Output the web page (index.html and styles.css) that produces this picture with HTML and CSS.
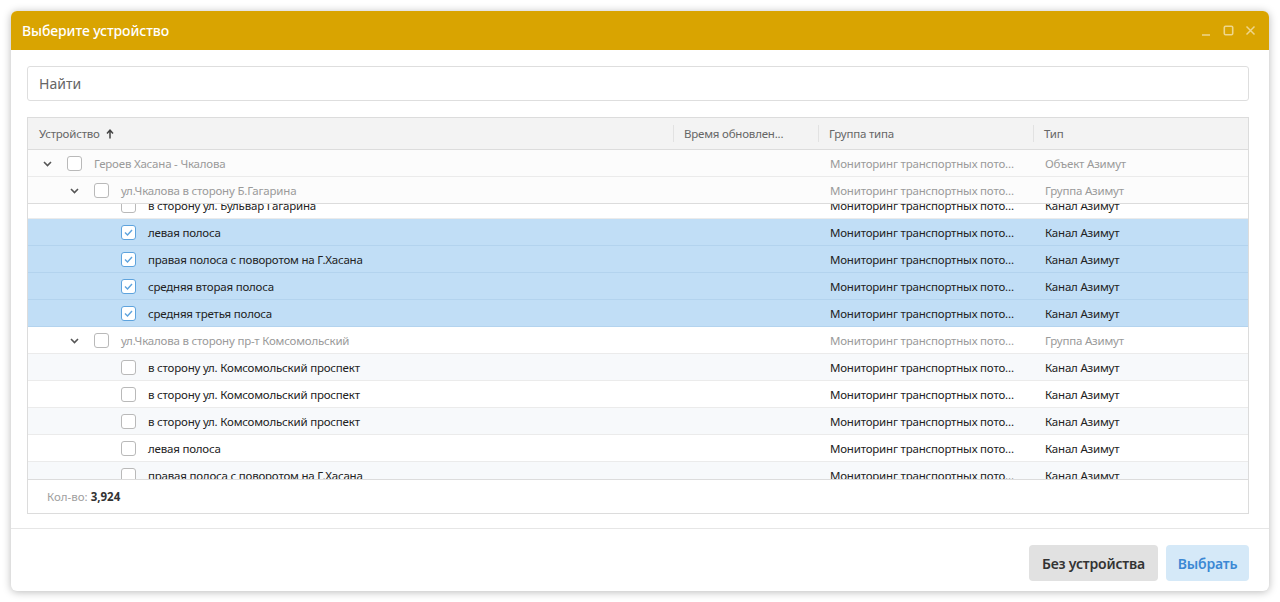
FILE: index.html
```html
<!DOCTYPE html>
<html lang="ru">
<head>
<meta charset="utf-8">
<title>Выберите устройство</title>
<link rel="stylesheet" href="styles.css">
</head>
<body>
<div class="dialog">
  <div class="titlebar">
    <div class="title">Выберите устройство</div>
    <div class="controls">
      <svg width="11" height="11" viewBox="0 0 11 11"><path d="M1 10h8" stroke="currentColor" stroke-width="1.6"/></svg>
      <svg width="11" height="11" viewBox="0 0 11 11"><rect x="1.3" y="1.3" width="8.4" height="8.4" rx="1.2" fill="none" stroke="currentColor" stroke-width="1.6"/></svg>
      <svg width="11" height="11" viewBox="0 0 11 11"><path d="M1.5 1.5l8 8M9.5 1.5l-8 8" stroke="currentColor" stroke-width="1.5"/></svg>
    </div>
  </div>
  <div class="content">
    <div class="search">Найти</div>
    <div class="table">
      <div class="thead row-grid">
        <div class="th">Устройство <svg class="sort" width="8" height="10" viewBox="0 0 8 10"><path d="M4 9.5V2M1 4.5L4 1.2 7 4.5" fill="none" stroke="currentColor" stroke-width="1.5"/></svg></div>
        <div class="th div">Время обновлен...</div>
        <div class="th div">Группа типа</div>
        <div class="th div">Тип</div>
      </div>
      <div class="tbody">
        <div class="row row-grid group sticky">
          <div class="cell tree"><span class="chev"></span><span class="cb"></span><span class="name">Героев Хасана - Чкалова</span></div>
          <div class="cell"></div>
          <div class="cell">Мониторинг транспортных пото…</div>
          <div class="cell">Объект Азимут</div>
        </div>
        <div class="row row-grid group sticky last-sticky">
          <div class="cell tree l1"><span class="chev"></span><span class="cb"></span><span class="name">ул.Чкалова в сторону Б.Гагарина</span></div>
          <div class="cell"></div>
          <div class="cell">Мониторинг транспортных пото…</div>
          <div class="cell">Группа Азимут</div>
        </div>
        <div class="clip">
          <div class="rows">
            <div class="row row-grid first">
              <div class="cell tree l2"><span class="noch"></span><span class="cb"></span><span class="name">в сторону ул. Бульвар Гагарина</span></div>
              <div class="cell"></div>
              <div class="cell">Мониторинг транспортных пото…</div>
              <div class="cell">Канал Азимут</div>
            </div>
            <div class="row row-grid sel">
              <div class="cell tree l2"><span class="noch"></span><span class="cb on"></span><span class="name">левая полоса</span></div>
              <div class="cell"></div>
              <div class="cell">Мониторинг транспортных пото…</div>
              <div class="cell">Канал Азимут</div>
            </div>
            <div class="row row-grid sel">
              <div class="cell tree l2"><span class="noch"></span><span class="cb on"></span><span class="name">правая полоса с поворотом на Г.Хасана</span></div>
              <div class="cell"></div>
              <div class="cell">Мониторинг транспортных пото…</div>
              <div class="cell">Канал Азимут</div>
            </div>
            <div class="row row-grid sel">
              <div class="cell tree l2"><span class="noch"></span><span class="cb on"></span><span class="name">средняя вторая полоса</span></div>
              <div class="cell"></div>
              <div class="cell">Мониторинг транспортных пото…</div>
              <div class="cell">Канал Азимут</div>
            </div>
            <div class="row row-grid sel">
              <div class="cell tree l2"><span class="noch"></span><span class="cb on"></span><span class="name">средняя третья полоса</span></div>
              <div class="cell"></div>
              <div class="cell">Мониторинг транспортных пото…</div>
              <div class="cell">Канал Азимут</div>
            </div>
            <div class="row row-grid group">
              <div class="cell tree l1"><span class="chev"></span><span class="cb"></span><span class="name">ул.Чкалова в сторону пр-т Комсомольский</span></div>
              <div class="cell"></div>
              <div class="cell">Мониторинг транспортных пото…</div>
              <div class="cell">Группа Азимут</div>
            </div>
            <div class="row row-grid alt">
              <div class="cell tree l2"><span class="noch"></span><span class="cb"></span><span class="name">в сторону ул. Комсомольский проспект</span></div>
              <div class="cell"></div>
              <div class="cell">Мониторинг транспортных пото…</div>
              <div class="cell">Канал Азимут</div>
            </div>
            <div class="row row-grid">
              <div class="cell tree l2"><span class="noch"></span><span class="cb"></span><span class="name">в сторону ул. Комсомольский проспект</span></div>
              <div class="cell"></div>
              <div class="cell">Мониторинг транспортных пото…</div>
              <div class="cell">Канал Азимут</div>
            </div>
            <div class="row row-grid alt">
              <div class="cell tree l2"><span class="noch"></span><span class="cb"></span><span class="name">в сторону ул. Комсомольский проспект</span></div>
              <div class="cell"></div>
              <div class="cell">Мониторинг транспортных пото…</div>
              <div class="cell">Канал Азимут</div>
            </div>
            <div class="row row-grid">
              <div class="cell tree l2"><span class="noch"></span><span class="cb"></span><span class="name">левая полоса</span></div>
              <div class="cell"></div>
              <div class="cell">Мониторинг транспортных пото…</div>
              <div class="cell">Канал Азимут</div>
            </div>
            <div class="row row-grid alt">
              <div class="cell tree l2"><span class="noch"></span><span class="cb"></span><span class="name">правая полоса с поворотом на Г.Хасана</span></div>
              <div class="cell"></div>
              <div class="cell">Мониторинг транспортных пото…</div>
              <div class="cell">Канал Азимут</div>
            </div>
          </div>
        </div>
      </div>
      <div class="tfoot"><span class="lbl">Кол-во:</span>&nbsp;<b>3,924</b></div>
    </div>
  </div>
  <div class="footer">
    <button class="btn gray">Без устройства</button>
    <button class="btn blue">Выбрать</button>
  </div>
</div>
</body>
</html>
```

FILE: styles.css
```css
* { box-sizing: border-box; }
html, body { margin: 0; padding: 0; background: #fff; }
body {
  font-family: "Noto Sans", "Open Sans", sans-serif;
  color: #222;
  padding: 11px;
}
.dialog {
  width: 1258px;
  height: 580px;
  border-radius: 6px;
  background: #fff;
  box-shadow: 0 1px 8px rgba(0,0,0,0.28);
  overflow: hidden;
  display: flex;
  flex-direction: column;
}
.titlebar {
  height: 39px;
  flex: none;
  background: #d9a401;
  display: flex;
  align-items: center;
  justify-content: space-between;
  padding: 0 13px 0 11px;
}
.title {
  color: #fff;
  font-size: 14px;
  font-weight: 500;
  letter-spacing: -0.1px;
}
.controls {
  display: flex;
  gap: 11px;
  color: rgba(255,255,255,0.55);
  align-items: center;
}
.controls svg { display: block; }
.content {
  flex: 1;
  padding: 16px 20px 0 16px;
  display: flex;
  flex-direction: column;
  gap: 16px;
}
.search {
  height: 35px;
  border: 1px solid #dedede;
  border-radius: 3px;
  padding: 0 11px;
  display: flex;
  align-items: center;
  font-size: 14px;
  color: #666;
}
.table {
  height: 397px;
  border: 1px solid #dcdcdc;
  display: flex;
  flex-direction: column;
}
.row-grid {
  display: grid;
  grid-template-columns: 645px 145px 215px 1fr;
}
.thead {
  height: 32px;
  flex: none;
  background: #f3f3f3;
  border-bottom: 1px solid #dcdcdc;
}
.th {
  display: flex;
  align-items: center;
  padding-left: 11px;
  font-size: 11.5px;
  letter-spacing: -0.2px;
  color: #666;
  position: relative;
}
.th.div::before {
  content: "";
  position: absolute;
  left: 0;
  top: 7px;
  bottom: 7px;
  width: 1px;
  background: #e2e2e2;
}
.sort { margin-left: 6px; color: #444; }
.tbody {
  flex: 1;
  display: flex;
  flex-direction: column;
  overflow: hidden;
}
.row {
  height: 27px;
  flex: none;
  border-bottom: 1px solid #ebebeb;
  font-size: 11.5px;
  letter-spacing: -0.2px;
  color: #222;
  background: #fff;
}
.row.alt { background: #f7f9fb; }
.row.sel { background: #c1def6; border-bottom-color: #b3d3ee; }
.row.group { color: #9a9a9a; }
.row.sticky { background: #fcfcfc; }
.row.last-sticky { border-bottom: 1px solid #dcdcdc; }
.cell {
  display: flex;
  align-items: center;
  padding-left: 12px;
  white-space: nowrap;
  overflow: hidden;
}
.tree.l1 { padding-left: 39px; }
.tree.l2 { padding-left: 66px; }
.chev, .noch {
  width: 27px;
  height: 15px;
  flex: none;
  display: inline-block;
}
.chev {
  background: no-repeat 3px 5px / 9px 6px url("data:image/svg+xml,%3Csvg xmlns='http://www.w3.org/2000/svg' viewBox='0 0 9 6'%3E%3Cpath d='M1 1l3.5 3.5L8 1' fill='none' stroke='%23555' stroke-width='1.6'/%3E%3C/svg%3E");
}
.cb {
  width: 15px;
  height: 15px;
  flex: none;
  border: 1px solid #b9b9b9;
  border-radius: 3px;
  background: #fff;
  margin-right: 12px;
}
.cb.on {
  border-color: #5ea3dd;
  background: #fff no-repeat center / 9px 7px url("data:image/svg+xml,%3Csvg xmlns='http://www.w3.org/2000/svg' viewBox='0 0 9 7'%3E%3Cpath d='M1 3.5l2.5 2.5L8 1' fill='none' stroke='%235ea3dd' stroke-width='1.4'/%3E%3C/svg%3E");
}
.clip {
  flex: 1;
  overflow: hidden;
}
.rows { display: flex; flex-direction: column; }
.row.first { margin-top: -12px; }
.tfoot {
  height: 34px;
  flex: none;
  border-top: 1px solid #dcdcdc;
  display: flex;
  align-items: center;
  padding-left: 19px;
  font-size: 11.5px;
  color: #333;
}
.tfoot .lbl { color: #a0a0a0; }
.tfoot b { font-weight: 700; color: #333; }
.footer {
  flex: none;
  height: 63px;
  margin-top: 14px;
  border-top: 1px solid #e6e6e6;
  display: flex;
  justify-content: flex-end;
  align-items: flex-start;
  gap: 8px;
  padding: 16px 20px 0 0;
}
.btn {
  height: 36px;
  border: none;
  border-radius: 4px;
  font-family: inherit;
  font-size: 14px;
  font-weight: 600;
  padding: 0;
  white-space: nowrap;
  letter-spacing: -0.2px;
}
.btn.gray { background: #e1e1e1; color: #333; width: 129px; }
.btn.blue { background: #d5e9f8; color: #3b88d4; width: 83px; }
```
